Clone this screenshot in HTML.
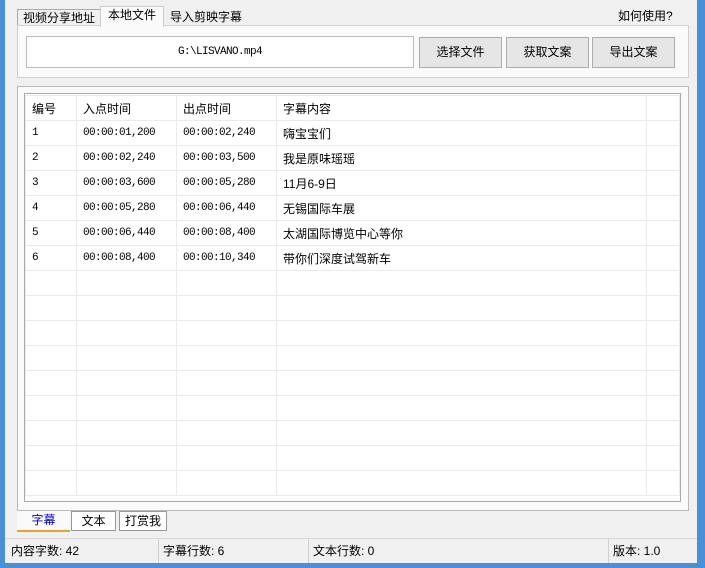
<!DOCTYPE html>
<html><head><meta charset="utf-8"><style>
*{box-sizing:border-box;margin:0;padding:0}
body{width:705px;height:568px;background:#4a90d9;font-family:"Liberation Sans","Noto Sans CJK SC",sans-serif;font-size:12px;color:#000;position:relative;overflow:hidden}
.win{position:absolute;left:5px;top:0;width:692px;height:563px;background:#f0f0f0}
.a{position:absolute}
.tab{position:absolute;top:8px;height:18px;border:1px solid #aaa;border-bottom:none;background:#f0f0f0;font-size:12px;text-align:center;line-height:16px}
.btn{position:absolute;top:37px;height:31px;width:83px;border:1px solid #adadad;background:#e6e6e6;text-align:center;line-height:29px;font-size:12px}
.mono{font-family:"Liberation Mono","Noto Sans CJK SC",monospace;font-size:11px;letter-spacing:-0.6px}
table{border-collapse:collapse;position:absolute;left:20px;top:95px;background:#fff}
td{border:1px solid #eaeaea;height:25px;padding:0 0 0 6px;font-size:12px;white-space:nowrap;vertical-align:middle}
.btab{position:absolute;top:511px;height:20px;border:1px solid #999;background:#fff;text-align:center;line-height:18px}
.sep{position:absolute;top:539px;width:1px;height:24px;background:#d0d0d0}
.st{position:absolute;top:542px}
</style></head><body>
<div class="win">
<div class="tab" style="left:12px;width:84px;top:9px">视频分享地址</div>
<div class="tab" style="left:159px;width:84px;top:9px;border:none">导入剪映字幕</div>
<div class="a" style="left:12px;top:25px;width:672px;height:53px;border:1px solid #d0d0d0;background:#fafafa"></div>
<div class="tab" style="left:95px;width:64px;top:6px;height:21px;background:#fafafa;border-color:#ccc">本地文件</div>
<div class="a" style="left:613px;top:7px">如何使用?</div>
<div class="a mono" style="left:21px;top:36px;width:388px;height:32px;border:1px solid #bbb;background:#fff;text-align:center;line-height:30px">G:\LISVANO.mp4</div>
<div class="btn" style="left:414px">选择文件</div>
<div class="btn" style="left:501px">获取文案</div>
<div class="btn" style="left:587px">导出文案</div>
<div class="a" style="left:12px;top:86px;width:672px;height:425px;border:1px solid #bbb;background:#fafafa"></div>
<div class="a" style="left:19px;top:93px;width:657px;height:409px;border:1px solid #aaa;background:#fff"></div>
<table>
<colgroup><col style="width:51px"><col style="width:100px"><col style="width:100px"><col style="width:370px"><col style="width:33px"></colgroup>
<tr><td>编号</td><td>入点时间</td><td>出点时间</td><td>字幕内容</td><td></td></tr>
<tr><td class="mono">1</td><td class="mono">00:00:01,200</td><td class="mono">00:00:02,240</td><td>嗨宝宝们</td><td></td></tr>
<tr><td class="mono">2</td><td class="mono">00:00:02,240</td><td class="mono">00:00:03,500</td><td>我是原味瑶瑶</td><td></td></tr>
<tr><td class="mono">3</td><td class="mono">00:00:03,600</td><td class="mono">00:00:05,280</td><td>11月6-9日</td><td></td></tr>
<tr><td class="mono">4</td><td class="mono">00:00:05,280</td><td class="mono">00:00:06,440</td><td>无锡国际车展</td><td></td></tr>
<tr><td class="mono">5</td><td class="mono">00:00:06,440</td><td class="mono">00:00:08,400</td><td>太湖国际博览中心等你</td><td></td></tr>
<tr><td class="mono">6</td><td class="mono">00:00:08,400</td><td class="mono">00:00:10,340</td><td>带你们深度试驾新车</td><td></td></tr>
<tr><td></td><td></td><td></td><td></td><td></td></tr>
<tr><td></td><td></td><td></td><td></td><td></td></tr>
<tr><td></td><td></td><td></td><td></td><td></td></tr>
<tr><td></td><td></td><td></td><td></td><td></td></tr>
<tr><td></td><td></td><td></td><td></td><td></td></tr>
<tr><td></td><td></td><td></td><td></td><td></td></tr>
<tr><td></td><td></td><td></td><td></td><td></td></tr>
<tr><td></td><td></td><td></td><td></td><td></td></tr>
<tr><td></td><td></td><td></td><td></td><td style="height:24px"></td></tr>
</table>
<div class="btab" style="left:12px;width:53px;border:none;background:#fafafa;color:#00c;border-bottom:2px solid #e8a030;height:21px">字幕</div>
<div class="btab" style="left:66px;width:45px">文本</div>
<div class="btab" style="left:114px;width:48px">打赏我</div>
<div class="a" style="left:0;top:538px;width:692px;height:1px;background:#d8d8d8"></div>
<div class="st" style="left:6px">内容字数: 42</div>
<div class="sep" style="left:153px"></div>
<div class="st" style="left:158px">字幕行数: 6</div>
<div class="sep" style="left:303px"></div>
<div class="st" style="left:308px">文本行数: 0</div>
<div class="sep" style="left:603px"></div>
<div class="st" style="left:608px">版本: 1.0</div>
</div>
</body></html>
